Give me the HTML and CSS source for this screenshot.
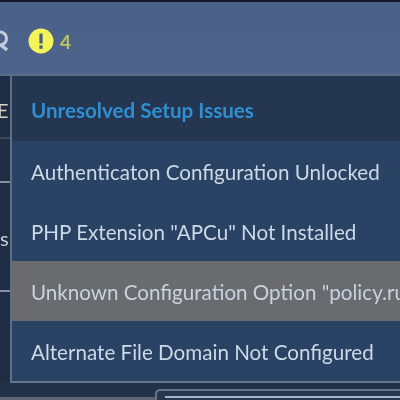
FILE: index.html
```html
<!DOCTYPE html>
<html lang="en">
<head>
<meta charset="utf-8">
<title>Setup Issues</title>
<link rel="stylesheet" href="styles.css">
</head>
<body>
<div class="page">
<header class="topbar">
  <svg class="search" width="10" height="24" viewBox="0 0 10 24"><circle cx="0" cy="9.5" r="6.5" fill="none" stroke="#c3ccdc" stroke-width="3"/><path d="M1 16l6 5" stroke="#c3ccdc" stroke-width="3.4"/></svg>
  <svg class="alert" width="26" height="26" viewBox="0 0 26 26"><circle cx="13" cy="13" r="12.5" fill="#f2f45a"/><rect x="11.4" y="5.5" width="3.2" height="10" fill="#4a5a80"/><rect x="11.4" y="17.4" width="3.2" height="3.4" fill="#4a5a80"/></svg>
  <span class="count">4</span>
</header>
<div class="content">
  <aside class="side">
    <div class="side-e">E</div>
    <div class="side-rule faint"></div>
    <div class="side-rule"></div>
    <div class="side-s">s</div>
    <div class="side-rule low"></div>
  </aside>
  <nav class="menu">
    <div class="menu-title">Unresolved Setup Issues</div>
    <a class="item">Authenticaton Configuration Unlocked</a>
    <a class="item">PHP Extension "APCu" Not Installed</a>
    <a class="item hover">Unknown Configuration Option "policy.ru</a>
    <a class="item">Alternate File Domain Not Configured</a>
  </nav>
</div>
<footer class="foot">
  <div class="foot-box"><div class="foot-line"></div></div>
</footer>
</div>
</body>
</html>
```
FILE: styles.css
```css
* { box-sizing: border-box; }
html, body { margin: 0; padding: 0; }
body {
  width: 400px;
  height: 400px;
  overflow: hidden;
  background: #223249;
  font-family: Lato, "Liberation Sans", sans-serif;
}
.page {
  width: 400px;
  height: 400px;
  display: flex;
  flex-direction: column;
  filter: blur(0.5px);
}
.topbar {
  height: 76px;
  flex: none;
  display: flex;
  align-items: center;
  padding-top: 6px;
  border-top: 2px solid #16182a;
  border-bottom: 2px solid #5a6d84;
  background: linear-gradient(#4b6088, #4f648c);
}
.search { flex: none; }
.alert { margin-left: 18px; flex: none; }
.count { margin-left: 6px; font-size: 19px; font-weight: 700; color: #b9c463; }
.content { height: 307px; flex: none; display: flex; }
.side {
  width: 10px;
  flex: none;
  display: flex;
  flex-direction: column;
  background: #1f2d44;
  color: #c7d0dc;
  font-size: 20px;
  overflow: hidden;
}
.side-e { margin-top: 22px; height: 24px; line-height: 24px; margin-left: -3px; color: #d7d2c8; }
.side-rule { height: 2px; flex: none; background: #8390a0; margin-top: 42px; }
.side-rule.faint { background: #39485c; margin-top: 15px; }
.side-rule.low { margin-top: 40px; }
.side-s { margin-top: 43px; margin-left: 0; height: 24px; line-height: 24px; }
.menu {
  flex: 1;
  min-width: 0;
  background: #2a4263;
  border-left: 2px solid #5f6f83;
  border-bottom: 2px solid #66768a;
  display: flex;
  flex-direction: column;
  overflow: hidden;
}
.menu-title {
  height: 65px;
  flex: none;
  padding: 3px 0 0 19px;
  display: flex;
  align-items: center;
  background: #243650;
  color: #2f8fd0;
  font-size: 20.6px;
  font-weight: 700;
  white-space: nowrap;
}
.item {
  height: 60px;
  flex: none;
  padding: 2px 0 0 19px;
  display: flex;
  align-items: center;
  color: #ccd9e7;
  font-size: 20.6px;
  white-space: nowrap;
}
.hover { background: #6a6b6e; color: #c8d3df; }
.foot {
  flex: 1;
  display: flex;
  align-items: flex-end;
  padding-left: 155px;
  background: linear-gradient(#223249 85%, #5c6672 85%);
}
.foot-box {
  flex: 1;
  height: 11px;
  border: 2px solid #66768a;
  border-right: 0;
  border-bottom: 0;
  border-top-left-radius: 5px;
  padding: 5px 0 0 8px;
  background: #26384f;
}
.foot-line { height: 2px; background: #a9b4c0; }
```
